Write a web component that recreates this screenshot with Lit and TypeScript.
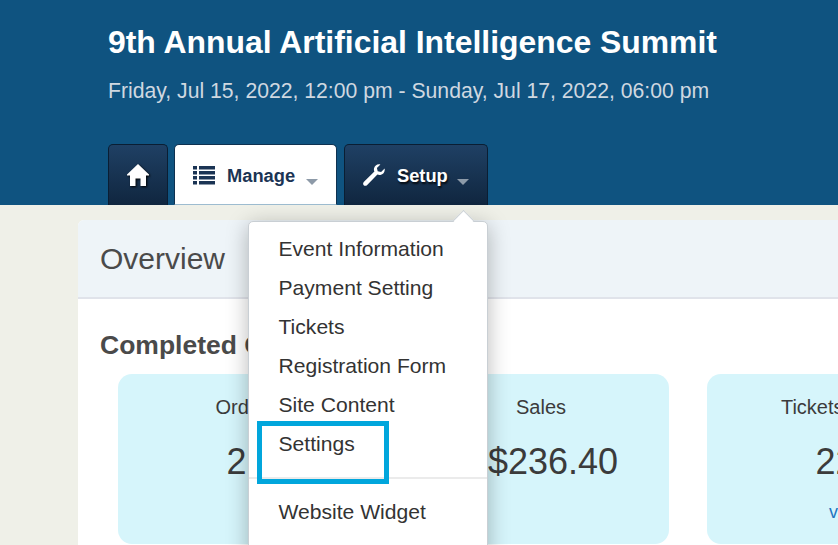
import { LitElement, html, css } from "lit";
import { customElement } from "lit/decorators.js";

const items = ["Event Information", "Payment Setting", "Tickets", "Registration Form", "Site Content", "Settings"];

@customElement("app-root")
export class AppRoot extends LitElement {
  static styles = css`
    :host { display: block; width: 838px; height: 545px; overflow: hidden; position: relative; background: #eff0e8; font-family: "Liberation Sans", Arial, sans-serif; }
    header { height: 205px; box-sizing: border-box; background: #0f5380; padding: 23px 0 0 108px; display: flex; flex-direction: column; }
    h1 { margin: 0; font-size: 31.9px; line-height: 38px; font-weight: 700; color: #fff; white-space: nowrap; }
    .date { margin-top: 18px; font-size: 21.2px; line-height: 24px; color: #cfd8e0; white-space: nowrap; }
    nav { display: flex; gap: 6px; margin-top: 41px; height: 61px; align-items: stretch; }
    .tab { box-sizing: border-box; border-radius: 5px 5px 0 0; display: flex; align-items: center; font-size: 18.3px; font-weight: 700; border: 1px solid #0a1e33; border-bottom: 0; background: linear-gradient(#1f4064, #10263f); color: #fff; }
    .home { width: 60px; justify-content: center; }
    .home svg { filter: drop-shadow(1px 1px 1px #000); }
    .manage { width: 163px; background: #fff; color: #1b3454; border-color: #0e3150; padding-left: 18px; border-bottom: 1px solid #9dbcd0; }
    .setup { width: 144px; margin-left: 1px; padding-left: 18px; text-shadow: 1px 2px 2px rgba(0, 0, 0, .8); }
    .tab span { margin-left: 12px; position: relative; top: 1px; }
    .caret { width: 0; height: 0; border: 6px solid transparent; border-top: 6px solid #8d9aa8; border-bottom: 0; margin: 14px 0 0 11px; }
    .setup .caret { margin-left: 9px; }
    main { padding: 15px 0 0 78px; }
    .panel { width: 900px; height: 400px; background: #fff; border-radius: 6px 0 0 0; box-sizing: border-box; }
    .head { height: 79px; box-sizing: border-box; background: #eef4f8; border-bottom: 2px solid #e0e3ea; border-radius: 6px 0 0 0; padding: 21px 0 0 22px; font-size: 30px; line-height: 36px; color: #4a4a4a; }
    .body { padding: 29px 0 0 22px; }
    h2 { margin: 0; font-size: 26.5px; line-height: 34px; font-weight: 700; color: #4a4a4a; white-space: nowrap; }
    .cards { display: flex; gap: 39px; margin: 12px 0 0 18px; }
    .card { flex: none; width: 256px; height: 170px; box-sizing: border-box; background: #d6f5fb; border-radius: 14px; text-align: center; color: #3b3b3b; padding-top: 21px; }
    .card:last-child { margin-left: -1px; }
    .label { font-size: 20px; line-height: 24px; }
    .num { font-size: 36px; line-height: 44px; margin-top: 21px; padding-left: 1px; }
    .offset { padding-left: 24px; }
    .link { font-size: 18px; line-height: 22px; color: #1f74c0; margin-top: 17px; }
    .menu { position: absolute; left: 248px; top: 221px; width: 240px; height: 340px; background: #fff; border: 1px solid #c9cfd4; border-radius: 5px; box-sizing: border-box; box-shadow: 0 4px 22px rgba(0, 0, 0, .28); padding: 7px 0 0 29.5px; font-size: 21.1px; color: #333; }
    .menu::before { content: ""; position: absolute; left: 207px; top: -9px; width: 14px; height: 14px; background: #fff; border: 1px solid #c9cfd4; border-width: 1px 0 0 1px; transform: rotate(45deg); }
    .item { line-height: 39px; height: 39px; white-space: nowrap; position: relative; }
    .sep { height: 2px; background: #ebebeb; margin: 14px 0 13px -29.5px; }
    .mark { position: absolute; left: 257px; top: 421px; width: 132px; height: 63px; box-sizing: border-box; border: 5px solid #01a6dc; }
    svg { display: block; flex: none; }
  `;

  render() {
    return html`
      <header>
        <h1>9th Annual Artificial Intelligence Summit</h1>
        <div class="date">Friday, Jul 15, 2022, 12:00 pm - Sunday, Jul 17, 2022, 06:00 pm</div>
        <nav>
          <div class="tab home">
            <svg width="22" height="22" viewBox="0 0 22 22"><path fill="#fff" d="M11 0 L22 10.5 V11.5 H19 V22 H13.5 V14.5 H8.5 V22 H3 V11.5 H0 V10.5 Z"/></svg>
          </div>
          <div class="tab manage">
            <svg width="22" height="20" viewBox="0 0 22 20" fill="#1b3454"><rect x="0" y="1" width="4" height="3.5"/><rect x="6" y="1" width="16" height="3.5"/><rect x="0" y="6" width="4" height="3.5"/><rect x="6" y="6" width="16" height="3.5"/><rect x="0" y="11" width="4" height="3.5"/><rect x="6" y="11" width="16" height="3.5"/><rect x="0" y="16" width="4" height="3.5"/><rect x="6" y="16" width="16" height="3.5"/></svg>
            <span>Manage</span><i class="caret"></i>
          </div>
          <div class="tab setup">
            <svg width="22" height="22" viewBox="0 0 22 22"><path fill="#fff" d="M21.6 4.6 C22.3 7.6 20.4 10.6 17.4 11 C16.3 11.2 15.3 11 14.4 10.6 L4.2 21 C3 22.2 1.5 22 .7 21.2 C-.1 20.4 -.2 18.9 1 17.8 L11.4 7.6 C10.9 6.6 10.8 5.5 11 4.4 C11.6 1.4 14.5 -.4 17.4 .4 L13.9 3.9 L14.7 7.3 L18.1 8.1 Z"/></svg>
            <span>Setup</span><i class="caret"></i>
          </div>
        </nav>
      </header>
      <main>
        <section class="panel">
          <div class="head">Overview</div>
          <div class="body">
            <h2>Completed Orders</h2>
            <div class="cards">
              <div class="card"><div class="label">Orders</div><div class="num">21</div></div>
              <div class="card"><div class="label">Sales</div><div class="num offset">$236.40</div></div>
              <div class="card"><div class="label">Tickets Sold</div><div class="num">22</div><div class="link offset">view</div></div>
            </div>
          </div>
        </section>
      </main>
      <div class="menu">
        ${items.map((t) => html`<div class="item">${t}</div>`)}
        <div class="sep"></div>
        <div class="item">Website Widget</div>
      </div>
      <div class="mark"></div>
    `;
  }
}
